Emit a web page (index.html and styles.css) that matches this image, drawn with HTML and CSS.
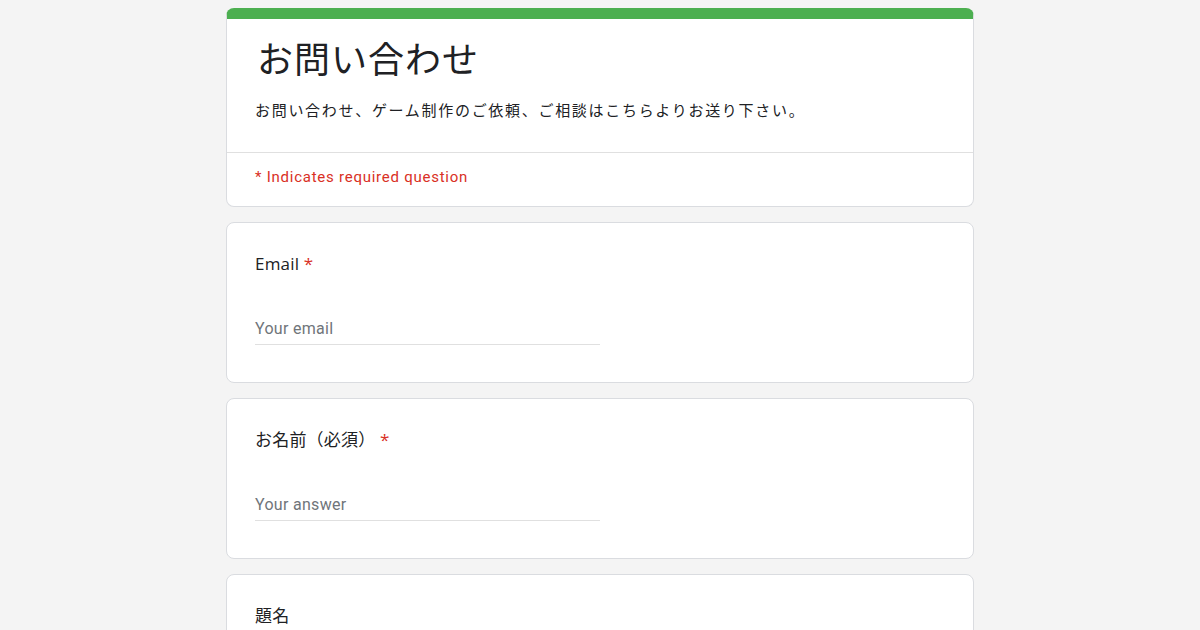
FILE: index.html
```html
<!DOCTYPE html>
<html lang="ja">
  <head>
    <meta charset="UTF-8" />
    <meta name="viewport" content="width=device-width, initial-scale=1.0" />
    <title>お問い合わせ</title>
    <link rel="stylesheet" href="styles.css">
  </head>
  <body>
    <div class="form">
      <div class="card head">
        <div class="head-top">
          <h1 class="title">お問い合わせ</h1>
          <p class="desc">お問い合わせ、ゲーム制作のご依頼、ご相談はこちらよりお送り下さい。</p>
        </div>
        <div class="required-note">* Indicates required question</div>
      </div>

      <div class="card question">
        <div class="label">Email <span class="star">*</span></div>
        <div class="input"><span class="placeholder">Your email</span></div>
      </div>

      <div class="card question">
        <div class="label">お名前（必須） <span class="star">*</span></div>
        <div class="input"><span class="placeholder">Your answer</span></div>
      </div>

      <div class="card question">
        <div class="label">題名</div>
        <div class="input"><span class="placeholder">Your answer</span></div>
      </div>
    </div>
  </body>
</html>
```

FILE: styles.css
```css
* {
  margin: 0;
  padding: 0;
  box-sizing: border-box;
}
body {
  background: #f4f4f4;
  font-family: Roboto, "Noto Sans CJK JP", sans-serif;
  color: #202124;
}
.form {
  width: 748px;
  margin: 8px auto 0;
  display: flex;
  flex-direction: column;
  gap: 15px;
}
.card {
  background: #fff;
  border: 1px solid #dadce0;
  border-radius: 8px;
}
.head {
  border-top: 11px solid #4caf50;
}
.head-top {
  padding: 17px 28px 32px;
  border-bottom: 1px solid #e0e0e0;
}
.title {
  font-family: "Noto Sans CJK JP", sans-serif;
  font-size: 36px;
  font-weight: 400;
  line-height: 42px;
  letter-spacing: 1px;
  padding-left: 2px;
}
.desc {
  margin-top: 22px;
  font-family: "Noto Sans CJK JP", sans-serif;
  font-size: 15px;
  line-height: 20px;
  letter-spacing: 1.7px;
}
.required-note {
  padding: 14px 28px 19px;
  font-size: 15px;
  line-height: 20px;
  color: #d93025;
  letter-spacing: 0.75px;
}
.question {
  padding: 29px 28px 37px;
}
.label {
  font-family: "Open Sans", "Noto Sans CJK JP", sans-serif;
  font-size: 17px;
  line-height: 24px;
  letter-spacing: 0.2px;
}
.star {
  color: #d93025;
}
.input {
  margin-top: 37px;
  width: 345px;
  height: 32px;
  display: flex;
  align-items: center;
  border-bottom: 1px solid #e0e0e0;
}
.placeholder {
  font-size: 16px;
  color: #70757a;
  letter-spacing: 0.3px;
}
```
